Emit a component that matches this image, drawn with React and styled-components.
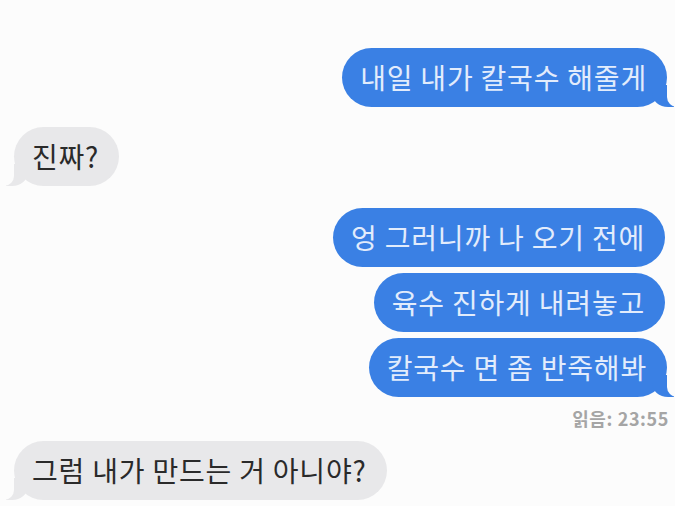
import React from "react";
import styled, { createGlobalStyle } from "styled-components";

const GlobalStyle = createGlobalStyle`
    html, body {
        margin: 0;
        padding: 0;
        background: #fcfcfc;
    }
    body {
        font-family: "Noto Sans CJK KR", "Noto Sans", sans-serif;
    }
`

const Chat = styled.div`
    width: 675px;
    height: 506px;
    box-sizing: border-box;
    padding: 48px 8px 0 14px;
    display: flex;
    flex-direction: column;
    overflow: hidden;
`
const Bubble = styled.div`
    position: relative;
    align-self: ${(p) => (p.$mine ? "flex-end" : "flex-start")};
    background: ${(p) => (p.$mine ? "#3a80e4" : "#e8e8ea")};
    color: ${(p) => (p.$mine ? "#e2ecfc" : "#2a2a2a")};
    font-size: 28px;
    letter-spacing: 0.8px;
    line-height: 31px;
    padding: 14px 20px 14px 18px;
    border-radius: 30px;
    margin-top: ${(p) => p.$top || 0}px;
    margin-right: ${(p) => p.$right || 0}px;
    white-space: nowrap;

    ${(p) => p.$tail && p.$mine && `
        &::before {
            content: "";
            position: absolute;
            bottom: 0;
            right: -7px;
            width: 22px;
            height: 22px;
            background: #3a80e4;
            border-bottom-left-radius: 16px 14px;
        }
        &::after {
            content: "";
            position: absolute;
            bottom: 0;
            right: -26px;
            width: 26px;
            height: 22px;
            background: #fcfcfc;
            border-bottom-left-radius: 10px;
        }
    `}

    ${(p) => p.$tail && !p.$mine && `
        &::before {
            content: "";
            position: absolute;
            bottom: 0;
            left: -8px;
            width: 22px;
            height: 22px;
            background: #e8e8ea;
            border-bottom-right-radius: 16px 14px;
        }
        &::after {
            content: "";
            position: absolute;
            bottom: 0;
            left: -26px;
            width: 26px;
            height: 22px;
            background: #fcfcfc;
            border-bottom-right-radius: 10px;
        }
    `}
`
const Text = styled.span`
    position: relative;
    z-index: 1;
`
const ReadStamp = styled.div`
    align-self: flex-end;
    margin-top: 10px;
    margin-right: -2px;
    font-size: 18px;
    line-height: 22px;
    font-weight: 700;
    color: #a5a5a5;
    letter-spacing: 0.6px;
`

function App() {
    return (
        <>
            <GlobalStyle />
            <Chat>
                <Bubble $mine $tail>
                    <Text>내일 내가 칼국수 해줄게</Text>
                </Bubble>
                <Bubble $tail $top={20}>
                    <Text>진짜?</Text>
                </Bubble>
                <Bubble $mine $top={22} $right={2}>
                    <Text>엉 그러니까 나 오기 전에</Text>
                </Bubble>
                <Bubble $mine $top={6} $right={2}>
                    <Text>육수 진하게 내려놓고</Text>
                </Bubble>
                <Bubble $mine $tail $top={6}>
                    <Text>칼국수 면 좀 반죽해봐</Text>
                </Bubble>
                <ReadStamp>읽음: 23:55</ReadStamp>
                <Bubble $tail $top={12}>
                    <Text>그럼 내가 만드는 거 아니야?</Text>
                </Bubble>
            </Chat>
        </>
    );
}

export default App;
